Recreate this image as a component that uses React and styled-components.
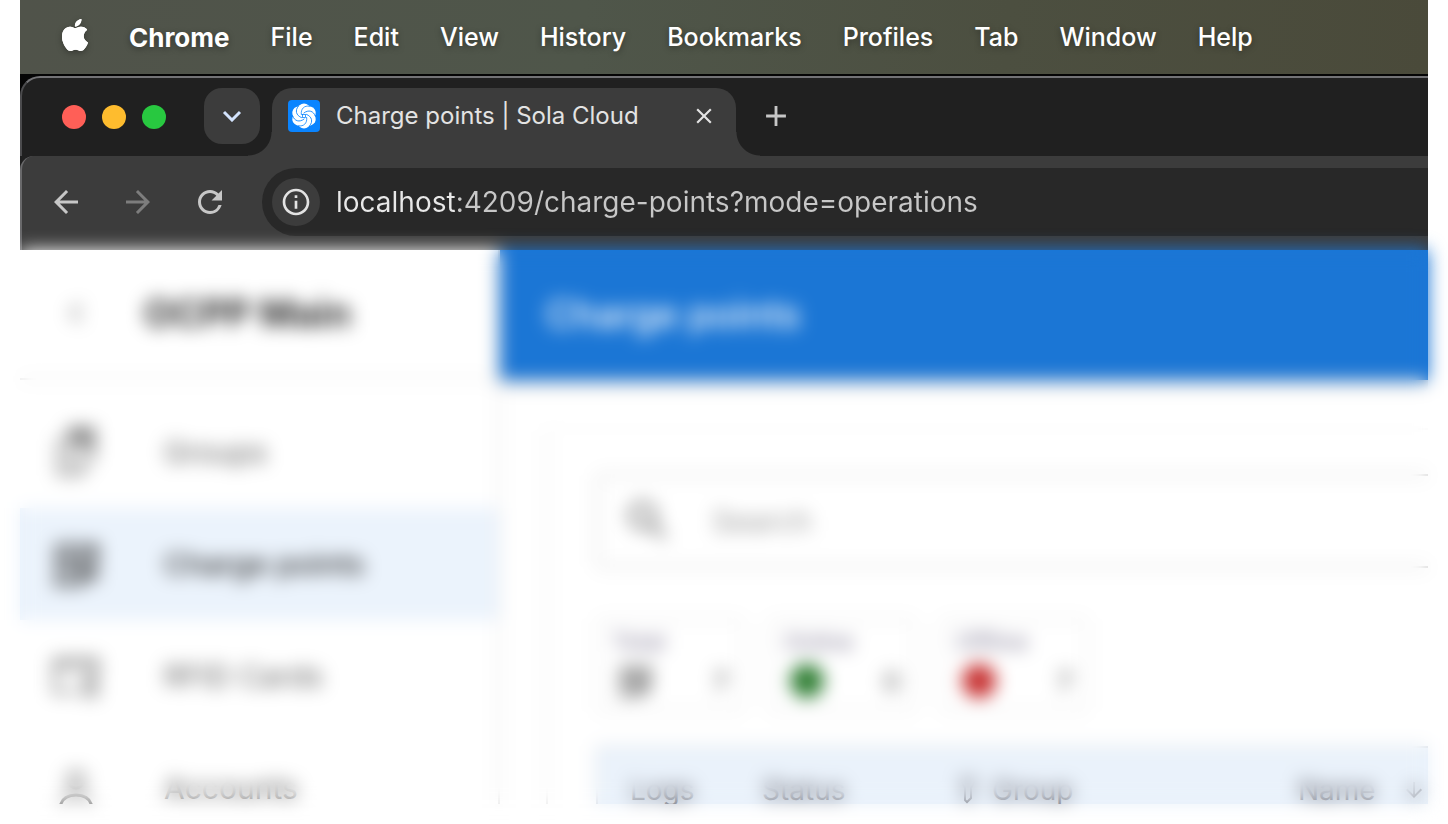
import styled, { createGlobalStyle } from "styled-components";
import { BsApple } from "react-icons/bs";
import {
	MdArrowBack,
	MdArrowForward,
	MdArrowDownward,
	MdChevronLeft,
	MdClose,
	MdAdd,
	MdRefresh,
	MdSearch,
	MdInfoOutline,
} from "react-icons/md";

const GlobalStyle = createGlobalStyle`
	* {
		box-sizing: border-box;
	}

	body {
		margin: 0;
		background: #fff;
		font-family: Inter, "Liberation Sans", sans-serif;
	}

	button {
		padding: 0;
		border: 0;
		background: none;
		color: inherit;
		font: inherit;
	}
`;

const menus = [
	"File",
	"Edit",
	"View",
	"History",
	"Bookmarks",
	"Profiles",
	"Tab",
	"Window",
	"Help",
];

const Screen = styled.div`
	display: flex;
	flex-direction: column;
	height: 100vh;
	padding: 0 20px 20px;
`;

const Desktop = styled.div`
	display: flex;
	flex: 1;
	flex-direction: column;
	min-height: 0;
	background: #050505;
`;

const MenuBar = styled.nav`
	display: flex;
	flex: none;
	align-items: center;
	gap: 38px;
	height: 74px;
	margin-bottom: 2px;
	padding-left: 39px;
	background: linear-gradient(95deg, #50534a, #4f564a 40%, #4c4f40 70%, #4a4a3a);
	color: #fff;
	font-size: 25px;
	font-weight: 500;
	text-shadow: 0 2px 6px rgba(0, 0, 0, 0.35);
`;

const AppleIcon = styled(BsApple)`
	width: 32px;
	height: 32px;
	margin-bottom: 4px;
	filter: drop-shadow(0 2px 3px rgba(0, 0, 0, 0.3));
`;

const MenuItems = styled.div`
	display: flex;
	align-items: center;
	gap: 41px;
`;

const MenuItem = styled.button`
	font-size: ${({ $bold }) => ($bold ? 26 : 25)}px;
	font-weight: ${({ $bold }) => ($bold ? 700 : 500)};
	text-shadow: inherit;
`;

const Browser = styled.div`
	display: flex;
	flex: 1;
	flex-direction: column;
	min-height: 0;
`;

const TabStrip = styled.div`
	display: flex;
	flex: none;
	align-items: flex-start;
	height: 80px;
	padding: 10px 0 0 40px;
	border-top: 2px solid #737376;
	border-left: 2px solid #4b4b4d;
	border-top-left-radius: 20px;
	background: #202020;
`;

const Lights = styled.div`
	display: flex;
	gap: 16px;
	margin: 17px 38px 0 0;
`;

const Light = styled.button`
	width: 24px;
	height: 24px;
	border-radius: 50%;
	background: ${({ $color }) => $color};
`;

const TabSearch = styled.button`
	display: grid;
	place-items: center;
	width: 56px;
	height: 56px;
	margin-right: 12px;
	border-radius: 18px;
	background: #3c3c3c;
	color: #d3e3fd;
`;

const Tab = styled.div`
	position: relative;
	display: flex;
	align-items: center;
	width: 464px;
	height: 68px;
	padding: 0 16px 12px;
	border-radius: 20px 20px 0 0;
	background: #3c3c3c;
	color: #e3e3e3;
	font-size: 24px;

	&::before,
	&::after {
		content: "";
		position: absolute;
		bottom: 0;
		width: 24px;
		height: 24px;
	}

	&::before {
		right: 100%;
		background: radial-gradient(circle at 0 0, transparent 23px, #3c3c3c 24px);
	}

	&::after {
		left: 100%;
		background: radial-gradient(circle at 100% 0, transparent 23px, #3c3c3c 24px);
	}
`;

const TabTitle = styled.span`
	flex: 1;
	margin-left: 16px;
	padding-bottom: 2px;
	white-space: nowrap;
`;

const IconButton = styled.button`
	display: grid;
	place-items: center;
	width: ${({ $size }) => $size}px;
	height: ${({ $size }) => $size}px;
	color: ${({ $color }) => $color || "#c7c7c7"};
`;

const NewTab = styled(IconButton)`
	margin-left: 12px;
`;

const Toolbar = styled.div`
	display: flex;
	flex: none;
	align-items: center;
	gap: 16px;
	height: 94px;
	padding: 12px 0 14px 16px;
	border-left: 2px solid #69696b;
	border-top-left-radius: 14px;
	background: #3c3c3c;
`;

const ToolbarWrap = styled.div`
	flex: none;
	background: #202020;
`;

const AddressBar = styled.div`
	display: flex;
	flex: 1;
	align-items: center;
	gap: 16px;
	height: 68px;
	margin-left: 8px;
	padding-left: 10px;
	border-radius: 34px 0 0 34px;
	background: #282828;
`;

const SiteInfo = styled(IconButton)`
	border-radius: 50%;
	background: #3c3c3c;
`;

/* host name is lighter than the rest of the url */
const AddressInput = styled.input`
	flex: 1;
	min-width: 0;
	padding: 0;
	border: 0;
	outline: 0;
	background: linear-gradient(90deg, #e8e8e8 120px, #c7c7c7 120px);
	background-clip: text;
	color: transparent;
	caret-color: #e8e8e8;
	font: 400 28px/36px Inter, "Liberation Sans", sans-serif;
`;

const Viewport = styled.div`
	position: relative;
	flex: 1;
	min-height: 0;
	background: #fff;
`;

const Frost = styled.div`
	position: absolute;
	inset: 0;
	filter: blur(9px);
`;

const Page = styled.div`
	display: flex;
	height: 100%;
	overflow: hidden;
	background: #fff;
	color: #2b2b2b;
	font-family: Inter, "Liberation Sans", sans-serif;
	font-size: 26px;
`;

const Sidebar = styled.aside`
	flex: none;
	width: 480px;
	border-right: 2px solid #e0e0e0;
`;

const SidebarHead = styled.div`
	display: flex;
	align-items: center;
	gap: 46px;
	height: 130px;
	padding: 0 0 2px 34px;
	border-bottom: 2px solid #e6e6e6;
	font-size: 38px;
	font-weight: 700;
`;

const NavList = styled.nav`
	padding-top: 16px;
`;

const NavLink = styled.a`
	display: flex;
	align-items: center;
	gap: 64px;
	height: 112px;
	padding-left: 32px;
	background: ${({ $active }) => ($active ? "#ebf3fc" : "none")};
	color: ${({ $active }) => ($active ? "#333" : "#606060")};
	font-size: 30px;
	font-weight: ${({ $active }) => ($active ? 500 : 400)};
	text-decoration: none;
`;

const Content = styled.main`
	flex: 1;
	min-width: 0;
`;

const AppBar = styled.header`
	display: flex;
	align-items: center;
	height: 130px;
	padding: 0 0 2px 46px;
	background: #1b76d5;
	box-shadow: 0 4px 8px rgba(0, 0, 0, 0.2);
	color: #fff;
	font-size: 38px;
	font-weight: 500;
`;

const Card = styled.section`
	margin: 48px 0 0 46px;
	padding: 44px 0 0 48px;
	border-top: 2px solid #f8f8f8;
	border-left: 2px solid #e6e6e6;
	border-top-left-radius: 8px;
`;

const SearchBox = styled.label`
	display: flex;
	align-items: center;
	gap: 38px;
	height: 94px;
	padding-left: 24px;
	border: 2px solid #cfcfcf;
	border-right: 0;
	border-radius: 8px 0 0 8px;
	color: #6c6c6c;

	input {
		flex: 1;
		min-width: 0;
		padding: 0;
		border: 0;
		outline: 0;
		background: none;
		font: 400 30px/36px Inter, sans-serif;
	}

	input::placeholder {
		color: #9a9a9a;
	}
`;

const Stats = styled.div`
	display: flex;
	gap: 24px;
	padding: 50px 0 34px;
`;

const Stat = styled.div`
	width: 148px;
	height: 94px;
	padding: 8px 14px 4px;
	border: 2px solid #e4e4e4;
	border-radius: 8px;
`;

const StatLabel = styled.div`
	color: #77718c;
	font-size: 23px;
	line-height: 28px;
`;

const StatRow = styled.div`
	display: flex;
	align-items: center;
	justify-content: space-between;
	height: 50px;
	padding-left: 6px;
	color: #444;
`;

const Dot = styled.span`
	width: 34px;
	height: 34px;
	border-radius: 50%;
	background: ${({ $color }) => $color};
`;

const Table = styled.table`
	width: 1120px;
	border: 2px solid #d8dde3;
	border-collapse: separate;
	border-spacing: 0;
	table-layout: fixed;
	background: #eaf2fb;

	th {
		height: 84px;
		padding: 0 0 0 32px;
		color: #66666f;
		font-size: 28px;
		font-weight: 400;
		text-align: left;
	}
`;

const Heading = styled.div`
	display: flex;
	align-items: center;
	gap: ${({ $gap }) => $gap || 0}px;
`;

const turns = [0, 60, 120, 180, 240, 300];

const Logo = () => (
	<svg width="32" height="32" viewBox="0 0 32 32">
		<rect width="32" height="32" rx="4" fill="#0a84ff" />
		<g fill="#fff">
			{turns.map((turn) => (
				<circle key={turn} cx="16" cy="9.6" r="6.2" transform={`rotate(${turn} 16 16)`} />
			))}
			<circle cx="16" cy="16" r="8" />
		</g>
		<g fill="none" stroke="#0a84ff" strokeWidth="0.8">
			{turns.map((turn) => (
				<path
					key={turn}
					d="M21.6 6.3C16.6 5.2 12.4 8.6 13.4 15"
					transform={`rotate(${turn} 16 16)`}
				/>
			))}
			<rect x="14.5" y="14.5" width="3" height="3" />
		</g>
	</svg>
);

const TabSearchIcon = () => (
	<svg width="20" height="12" viewBox="0 0 20 12" fill="none" stroke="currentColor" strokeWidth="3">
		<path d="M2 2l8 8 8-8" />
	</svg>
);

const GroupsIcon = () => (
	<svg width="48" height="54" viewBox="0 0 48 54" fill="none" stroke="currentColor" strokeWidth="3">
		<path d="M18 4h23v28l-8 8H18z" />
		<path d="M20 5h20v17H26z" fill="currentColor" fillOpacity="0.6" />
		<path d="M12 13l-5 4v32h22l4-4" />
	</svg>
);

const ChargerIcon = ({ size = 48 }) => (
	<svg width={size} height={size} viewBox="0 0 48 48" fill="none" stroke="currentColor" strokeWidth="4">
		<path d="M6 44V6h22v38M2 44h30M6 18h22M28 24h7v14h8V16l-7-8" />
		<path d="M18 20l-7 11h6l-2 9 9-12h-6z" fill="currentColor" stroke="none" />
		<path d="M34 6h10v10" />
	</svg>
);

const CardIcon = () => (
	<svg width="48" height="48" viewBox="0 0 48 48" fill="none" stroke="currentColor" strokeWidth="3">
		<path d="M22 40H3V8h42v16M3 14h42" />
		<path d="M32 31h12v12H32zM35 31v-5h6v5" />
	</svg>
);

const PersonIcon = () => (
	<svg width="48" height="48" viewBox="0 0 48 48" fill="none" stroke="currentColor" strokeWidth="3">
		<circle cx="24" cy="16" r="8" />
		<path d="M8 44c1-9 7-13 16-13s15 4 16 13z" />
	</svg>
);

const FilterIcon = () => (
	<svg width="20" height="28" viewBox="0 0 20 28" fill="none" stroke="currentColor" strokeWidth="2">
		<path d="M2 3h16l-5 9v10l-4 4-2-2V12z" />
	</svg>
);

const navItems = [
	{ label: "Groups", icon: <GroupsIcon /> },
	{ label: "Charge points", icon: <ChargerIcon />, active: true },
	{ label: "RFID Cards", icon: <CardIcon /> },
	{ label: "Accounts", icon: <PersonIcon /> },
];

const stats = [
	{ label: "Total", icon: <ChargerIcon size={34} />, value: 7 },
	{ label: "Online", icon: <Dot $color="#2e7d32" />, value: 0 },
	{ label: "Offline", icon: <Dot $color="#c62f2f" />, value: 7 },
];

const ChargePointsPage = () => (
	<Page>
		<Sidebar>
			<SidebarHead>
				<IconButton aria-label="Back to menu" $size={44} $color="#8a8a8a">
					<MdChevronLeft size={40} />
				</IconButton>
				OCPP Main
			</SidebarHead>
			<NavList>
				{navItems.map(({ label, icon, active }) => (
					<NavLink key={label} href="#" $active={active}>
						{icon}
						{label}
					</NavLink>
				))}
			</NavList>
		</Sidebar>
		<Content>
			<AppBar>Charge points</AppBar>
			<Card>
				<SearchBox>
					<MdSearch size={52} />
					<input type="search" placeholder="Search" aria-label="Search" />
				</SearchBox>
				<Stats>
					{stats.map(({ label, icon, value }) => (
						<Stat key={label}>
							<StatLabel>{label}</StatLabel>
							<StatRow>
								{icon}
								{value}
							</StatRow>
						</Stat>
					))}
				</Stats>
				<Table>
					<colgroup>
						<col width="132" />
						<col width="196" />
						<col width="340" />
						<col />
					</colgroup>
					<thead>
						<tr>
							<th>Logs</th>
							<th>Status</th>
							<th>
								<Heading $gap={14}>
									<FilterIcon />
									Group
								</Heading>
							</th>
							<th>
								<Heading $gap={26}>
									Name
									<MdArrowDownward size={24} />
								</Heading>
							</th>
						</tr>
					</thead>
				</Table>
			</Card>
		</Content>
	</Page>
);

export default function App() {
	return (
		<Screen>
			<GlobalStyle />
			<Desktop>
				<MenuBar>
					<AppleIcon />
					<MenuItems>
						<MenuItem $bold>Chrome</MenuItem>
						{menus.map((menu) => (
							<MenuItem key={menu}>{menu}</MenuItem>
						))}
					</MenuItems>
				</MenuBar>
				<Browser>
					<TabStrip>
						<Lights>
							<Light aria-label="Close window" $color="#ff5f57" />
							<Light aria-label="Minimize" $color="#febc2e" />
							<Light aria-label="Zoom window" $color="#28c840" />
						</Lights>
						<TabSearch aria-label="Search tabs">
							<TabSearchIcon />
						</TabSearch>
						<Tab>
							<Logo />
							<TabTitle>Charge points | Sola Cloud</TabTitle>
							<IconButton aria-label="Close tab" $size={32} $color="#e3e3e3">
								<MdClose size={26} />
							</IconButton>
						</Tab>
						<NewTab aria-label="New tab" $size={56}>
							<MdAdd size={34} />
						</NewTab>
					</TabStrip>
					<ToolbarWrap>
						<Toolbar>
							<IconButton aria-label="Back" $size={56}>
								<MdArrowBack size={36} />
							</IconButton>
							<IconButton aria-label="Forward" $size={56} $color="#7d7d7d">
								<MdArrowForward size={36} />
							</IconButton>
							<IconButton aria-label="Reload" $size={56}>
								<MdRefresh size={36} />
							</IconButton>
							<AddressBar>
								<SiteInfo aria-label="Site information" $size={48} $color="#e3e3e3">
									<MdInfoOutline size={32} />
								</SiteInfo>
								<AddressInput
									aria-label="Address"
									defaultValue="localhost:4209/charge-points?mode=operations"
								/>
							</AddressBar>
						</Toolbar>
					</ToolbarWrap>
					<Viewport>
						<ChargePointsPage />
						<Frost aria-hidden="true" inert>
							<ChargePointsPage />
						</Frost>
					</Viewport>
				</Browser>
			</Desktop>
		</Screen>
	);
}
